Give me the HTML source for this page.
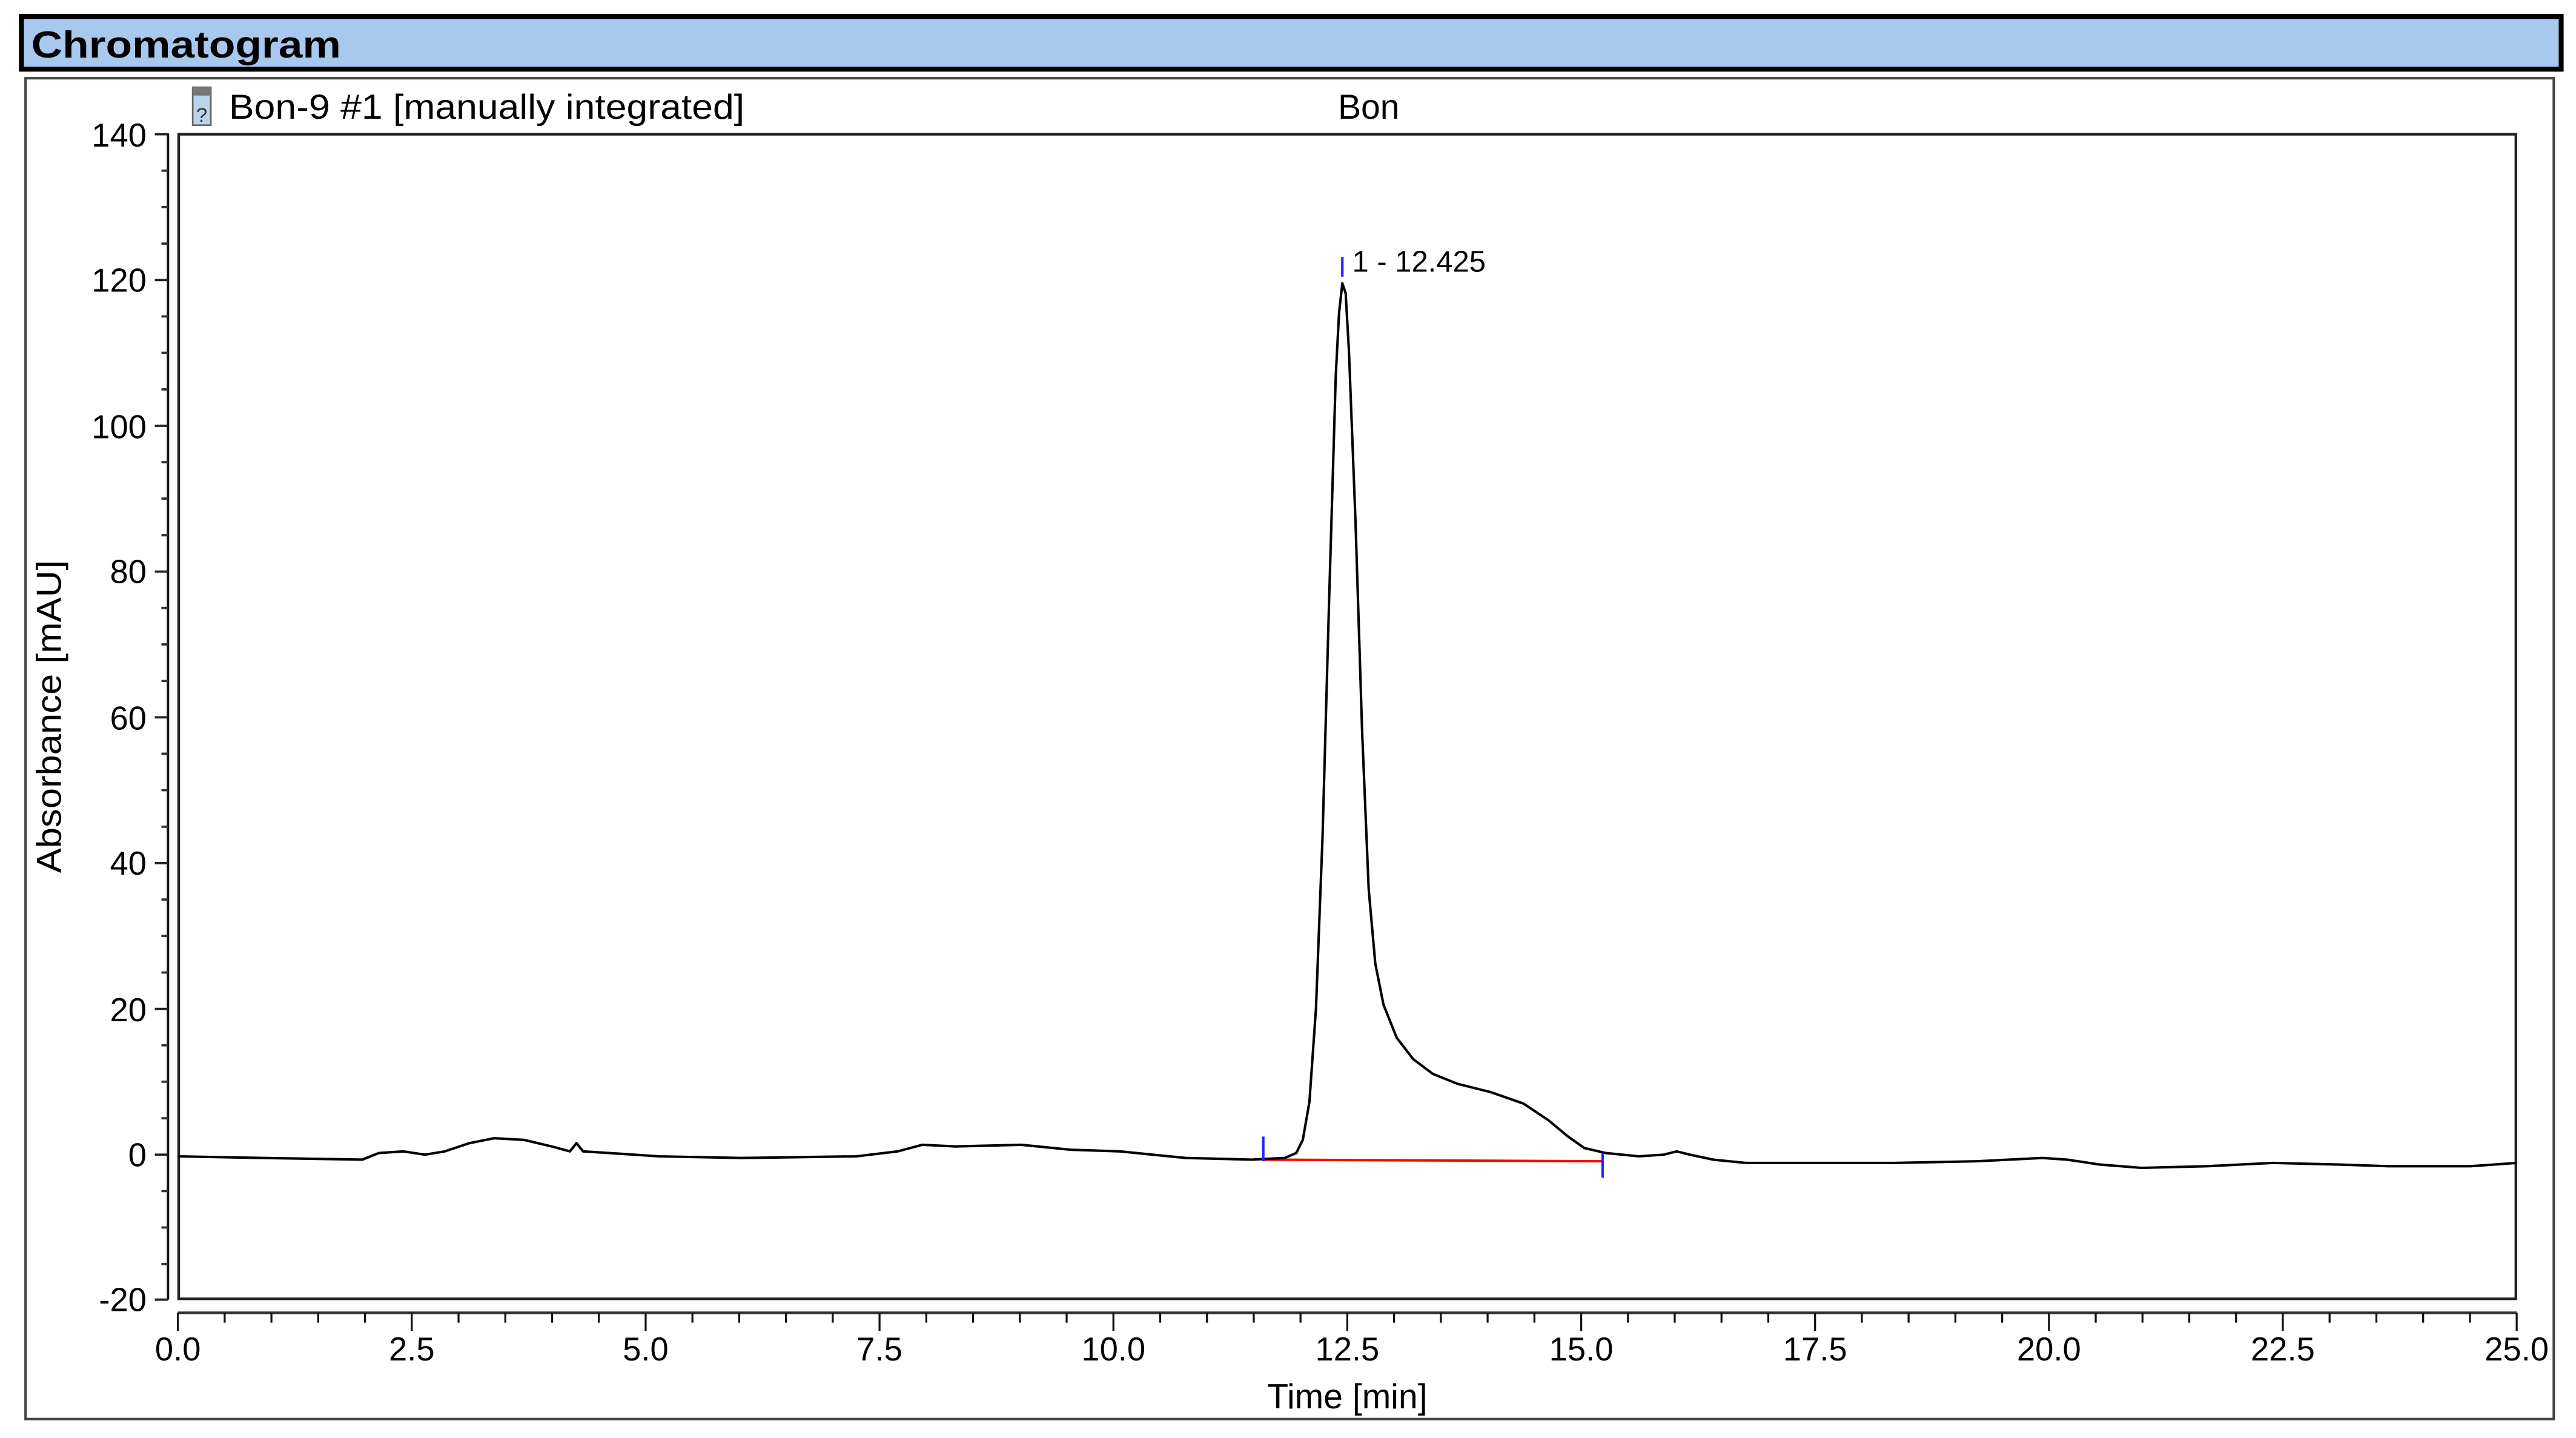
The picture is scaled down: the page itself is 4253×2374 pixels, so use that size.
<!DOCTYPE html>
<html><head><meta charset="utf-8"><style>
html,body{margin:0;padding:0;background:#fff;}
svg{display:block;}
text{font-family:"Liberation Sans",sans-serif;}
</style></head><body>
<svg width="4253" height="2374" viewBox="0 0 1564 873" preserveAspectRatio="none" xmlns="http://www.w3.org/2000/svg">
<rect x="0" y="0" width="1564" height="873" fill="#fff"/>
<rect x="13" y="10" width="1542" height="32" fill="#a8c8ee" stroke="#000" stroke-width="3"/>
<text x="19" y="35" font-size="23" font-weight="bold" textLength="188" lengthAdjust="spacingAndGlyphs">Chromatogram</text>
<rect x="15.5" y="47.5" width="1535" height="814" fill="#fff" stroke="#444" stroke-width="1.5"/>
<rect x="108.5" y="81.5" width="1419" height="707" fill="#fff" stroke="#222" stroke-width="1.6"/>
<line x1="102" y1="81" x2="102" y2="789" stroke="#111" stroke-width="1.4"/>
<g stroke="#222" stroke-width="1.4">
<line x1="94" y1="81.5" x2="102" y2="81.5"/><line x1="94" y1="170" x2="102" y2="170"/><line x1="94" y1="258.5" x2="102" y2="258.5"/><line x1="94" y1="347" x2="102" y2="347"/><line x1="94" y1="435.5" x2="102" y2="435.5"/><line x1="94" y1="524" x2="102" y2="524"/><line x1="94" y1="612.5" x2="102" y2="612.5"/><line x1="94" y1="701" x2="102" y2="701"/><line x1="94" y1="789" x2="102" y2="789"/>
</g>
<g stroke="#333" stroke-width="1.4">
<line x1="98" y1="103.6" x2="102" y2="103.6"/><line x1="98" y1="125.7" x2="102" y2="125.7"/><line x1="98" y1="147.9" x2="102" y2="147.9"/>
<line x1="98" y1="192.1" x2="102" y2="192.1"/><line x1="98" y1="214.2" x2="102" y2="214.2"/><line x1="98" y1="236.4" x2="102" y2="236.4"/>
<line x1="98" y1="280.6" x2="102" y2="280.6"/><line x1="98" y1="302.7" x2="102" y2="302.7"/><line x1="98" y1="324.9" x2="102" y2="324.9"/>
<line x1="98" y1="369.1" x2="102" y2="369.1"/><line x1="98" y1="391.2" x2="102" y2="391.2"/><line x1="98" y1="413.4" x2="102" y2="413.4"/>
<line x1="98" y1="457.6" x2="102" y2="457.6"/><line x1="98" y1="479.7" x2="102" y2="479.7"/><line x1="98" y1="501.9" x2="102" y2="501.9"/>
<line x1="98" y1="546.1" x2="102" y2="546.1"/><line x1="98" y1="568.2" x2="102" y2="568.2"/><line x1="98" y1="590.4" x2="102" y2="590.4"/>
<line x1="98" y1="634.6" x2="102" y2="634.6"/><line x1="98" y1="656.7" x2="102" y2="656.7"/><line x1="98" y1="678.9" x2="102" y2="678.9"/>
<line x1="98" y1="723.1" x2="102" y2="723.1"/><line x1="98" y1="745.2" x2="102" y2="745.2"/><line x1="98" y1="767.4" x2="102" y2="767.4"/>
</g>
<g font-size="20" text-anchor="end">
<text x="89" y="89">140</text><text x="89" y="177">120</text><text x="89" y="266">100</text><text x="89" y="354">80</text><text x="89" y="443">60</text><text x="89" y="531">40</text><text x="89" y="620">20</text><text x="89" y="708">0</text><text x="89" y="796">-20</text>
</g>
<text transform="translate(37,435) rotate(-90)" font-size="21" text-anchor="middle" textLength="190" lengthAdjust="spacingAndGlyphs">Absorbance [mAU]</text>
<line x1="108" y1="797" x2="1528" y2="797" stroke="#333" stroke-width="1.6"/>
<g stroke="#111" stroke-width="1.2">
<line x1="108.0" y1="797" x2="108.0" y2="808"/><line x1="136.4" y1="797" x2="136.4" y2="803"/><line x1="164.8" y1="797" x2="164.8" y2="803"/><line x1="193.2" y1="797" x2="193.2" y2="803"/><line x1="221.6" y1="797" x2="221.6" y2="803"/>
<line x1="250.0" y1="797" x2="250.0" y2="808"/><line x1="278.4" y1="797" x2="278.4" y2="803"/><line x1="306.8" y1="797" x2="306.8" y2="803"/><line x1="335.2" y1="797" x2="335.2" y2="803"/><line x1="363.6" y1="797" x2="363.6" y2="803"/>
<line x1="392.0" y1="797" x2="392.0" y2="808"/><line x1="420.4" y1="797" x2="420.4" y2="803"/><line x1="448.8" y1="797" x2="448.8" y2="803"/><line x1="477.2" y1="797" x2="477.2" y2="803"/><line x1="505.6" y1="797" x2="505.6" y2="803"/>
<line x1="534.0" y1="797" x2="534.0" y2="808"/><line x1="562.4" y1="797" x2="562.4" y2="803"/><line x1="590.8" y1="797" x2="590.8" y2="803"/><line x1="619.2" y1="797" x2="619.2" y2="803"/><line x1="647.6" y1="797" x2="647.6" y2="803"/>
<line x1="676.0" y1="797" x2="676.0" y2="808"/><line x1="704.4" y1="797" x2="704.4" y2="803"/><line x1="732.8" y1="797" x2="732.8" y2="803"/><line x1="761.2" y1="797" x2="761.2" y2="803"/><line x1="789.6" y1="797" x2="789.6" y2="803"/>
<line x1="818.0" y1="797" x2="818.0" y2="808"/><line x1="846.4" y1="797" x2="846.4" y2="803"/><line x1="874.8" y1="797" x2="874.8" y2="803"/><line x1="903.2" y1="797" x2="903.2" y2="803"/><line x1="931.6" y1="797" x2="931.6" y2="803"/>
<line x1="960.0" y1="797" x2="960.0" y2="808"/><line x1="988.4" y1="797" x2="988.4" y2="803"/><line x1="1016.8" y1="797" x2="1016.8" y2="803"/><line x1="1045.2" y1="797" x2="1045.2" y2="803"/><line x1="1073.6" y1="797" x2="1073.6" y2="803"/>
<line x1="1102.0" y1="797" x2="1102.0" y2="808"/><line x1="1130.4" y1="797" x2="1130.4" y2="803"/><line x1="1158.8" y1="797" x2="1158.8" y2="803"/><line x1="1187.2" y1="797" x2="1187.2" y2="803"/><line x1="1215.6" y1="797" x2="1215.6" y2="803"/>
<line x1="1244.0" y1="797" x2="1244.0" y2="808"/><line x1="1272.4" y1="797" x2="1272.4" y2="803"/><line x1="1300.8" y1="797" x2="1300.8" y2="803"/><line x1="1329.2" y1="797" x2="1329.2" y2="803"/><line x1="1357.6" y1="797" x2="1357.6" y2="803"/>
<line x1="1386.0" y1="797" x2="1386.0" y2="808"/><line x1="1414.4" y1="797" x2="1414.4" y2="803"/><line x1="1442.8" y1="797" x2="1442.8" y2="803"/><line x1="1471.2" y1="797" x2="1471.2" y2="803"/><line x1="1499.6" y1="797" x2="1499.6" y2="803"/>
<line x1="1528.0" y1="797" x2="1528.0" y2="808"/>
</g>
<g font-size="20" text-anchor="middle">
<text x="108" y="826">0.0</text><text x="250" y="826">2.5</text><text x="392" y="826">5.0</text><text x="534" y="826">7.5</text><text x="676" y="826">10.0</text><text x="818" y="826">12.5</text><text x="960" y="826">15.0</text><text x="1102" y="826">17.5</text><text x="1244" y="826">20.0</text><text x="1386" y="826">22.5</text><text x="1528" y="826">25.0</text>
</g>
<text x="818" y="855" font-size="21" text-anchor="middle">Time [min]</text>
<rect x="117" y="53" width="11" height="23" fill="#b9d4ea" stroke="#666" stroke-width="1"/>
<rect x="117" y="53" width="11" height="5" fill="#777"/>
<text x="122.5" y="74" font-size="12" text-anchor="middle" fill="#333">?</text>
<text x="139" y="72" font-size="21" textLength="313" lengthAdjust="spacingAndGlyphs">Bon-9 #1 [manually integrated]</text>
<text x="831" y="72" font-size="21" text-anchor="middle">Bon</text>
<line x1="767" y1="704" x2="973" y2="705" stroke="#f00" stroke-width="1.5"/>
<polyline fill="none" stroke="#000" stroke-width="1.5" stroke-linejoin="round" points="108,702 160,703 220,704 230,700 245,699 258,701 270,699 285,694 300,691 318,692 335,696 346,699 350,694 354,699 370,700 400,702 450,703 520,702 545,699 560,695 580,696 620,695 650,698 680,699 720,703 760,704 780,703 787,700 791,692 795,669 799,612 803,507 807,363 811,228 813,190 815,172 817,178 819,213 823,317 827,444 831,540 835,585 840,610 848,630 858,643 870,652 885,658 905,663 925,670 940,680 952,690 962,697 975,700 995,702 1010,701 1018,699 1026,701 1040,704 1060,706 1150,706 1200,705 1240,703 1255,704 1275,707 1300,709 1340,708 1380,706 1420,707 1450,708 1500,708 1528,706"/>
<g stroke="#2222ff" stroke-width="1.5">
<line x1="767" y1="690" x2="767" y2="705"/>
<line x1="973" y1="700" x2="973" y2="715"/>
<line x1="815" y1="156" x2="815" y2="168"/>
</g>
<text x="821" y="165" font-size="18">1 - 12.425</text>
</svg>
</body></html>
